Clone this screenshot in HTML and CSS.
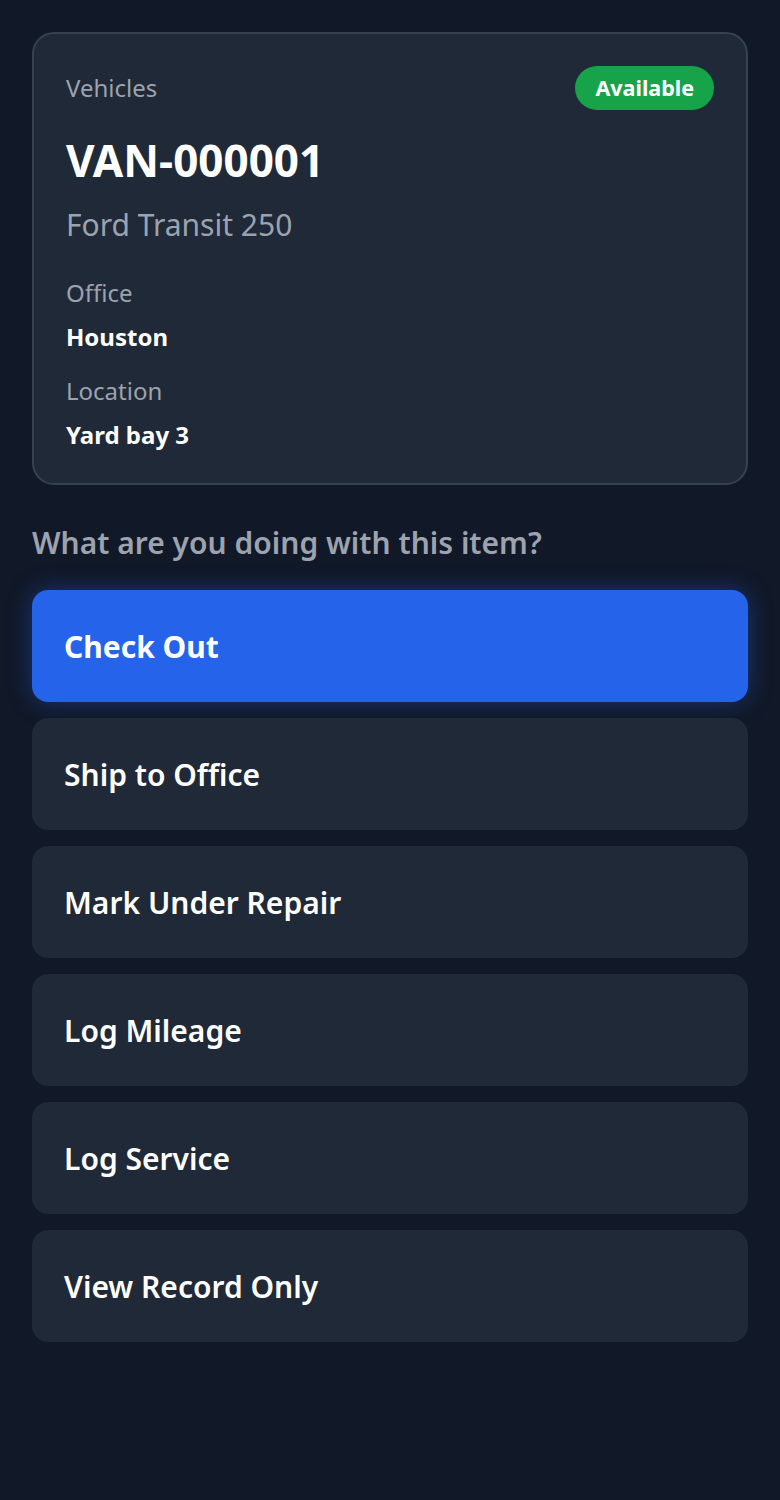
FILE: index.html
```html
<!DOCTYPE html>
<html lang="en">
<head>
<meta charset="utf-8">
<title>VAN-000001</title>
<link rel="stylesheet" href="styles.css">
</head>
<body>
<main class="page">
  <section class="card">
    <div class="card-head">
      <span class="category">Vehicles</span>
      <span class="badge">Available</span>
    </div>
    <h1 class="title">VAN-000001</h1>
    <p class="subtitle">Ford Transit 250</p>
    <div class="field">
      <div class="field-label">Office</div>
      <div class="field-value">Houston</div>
    </div>
    <div class="field field-second">
      <div class="field-label">Location</div>
      <div class="field-value">Yard bay 3</div>
    </div>
  </section>
  <h2 class="question">What are you doing with this item?</h2>
  <div class="actions">
    <button class="action action-primary">Check Out</button>
    <button class="action">Ship to Office</button>
    <button class="action">Mark Under Repair</button>
    <button class="action">Log Mileage</button>
    <button class="action">Log Service</button>
    <button class="action">View Record Only</button>
  </div>
</main>
</body>
</html>
```
FILE: styles.css
```css
html, body {
  margin: 0;
  padding: 0;
  background: #111827;
}
body {
  font-family: "Noto Sans", "Open Sans", sans-serif;
  color: #f9fafb;
}
.page {
  padding: 32px;
}
.card {
  background: #1f2937;
  border: 2px solid #374151;
  border-radius: 22px;
  padding: 32px 32px 31px;
}
.card-head {
  display: flex;
  justify-content: space-between;
  align-items: center;
  height: 44px;
}
.category {
  font-size: 24px;
  color: #9ca3af;
  line-height: 36px;
}
.badge {
  background: #16a34a;
  color: #ffffff;
  font-weight: 700;
  font-size: 21.5px;
  line-height: 44px;
  height: 44px;
  padding: 0 20px;
  border-radius: 22px;
}
.title {
  margin: 22px 0 0;
  font-size: 44px;
  line-height: 56px;
  font-weight: 700;
  color: #ffffff;
}
.subtitle {
  margin: 17px 0 0;
  font-size: 30px;
  line-height: 40px;
  color: #9ca3af;
}
.field {
  margin-top: 30px;
}
.field-second {
  margin-top: 19px;
}
.field-label {
  font-size: 24px;
  line-height: 36px;
  color: #9ca3af;
}
.field-value {
  margin-top: 9px;
  font-size: 24px;
  line-height: 34px;
  font-weight: 700;
  color: #ffffff;
}
.question {
  margin: 38px 0 0;
  font-size: 30px;
  line-height: 40px;
  font-weight: 600;
  color: #9ca3af;
}
.actions {
  margin-top: 27px;
  display: flex;
  flex-direction: column;
  gap: 16px;
}
.action {
  display: flex;
  align-items: center;
  height: 112px;
  padding: 0 32px;
  border: none;
  border-radius: 16px;
  background: #1f2937;
  color: #ffffff;
  font-family: inherit;
  font-size: 30px;
  font-weight: 600;
  text-align: left;
}
.action-primary {
  background: #2563eb;
  font-weight: 700;
  box-shadow: 0 0 24px rgba(37, 99, 235, 0.4);
}
```
